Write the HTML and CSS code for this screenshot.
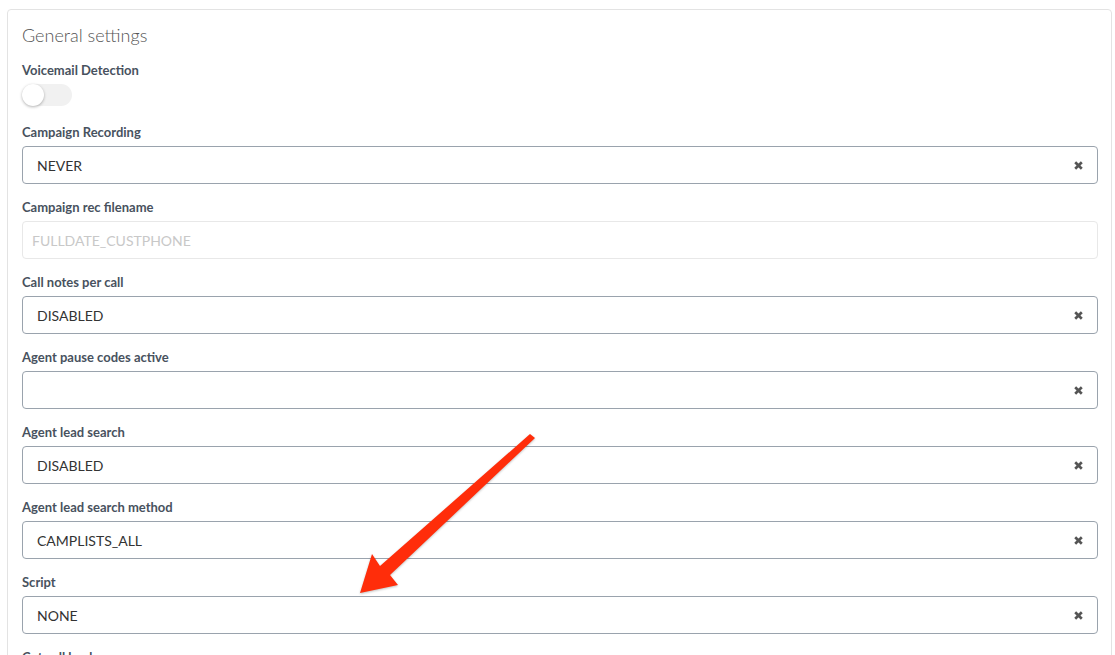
FILE: index.html
```html
<!DOCTYPE html>
<html lang="en">
<head>
  <meta charset="UTF-8" />
  <title>Campaign | General settings</title>
  <meta name="viewport" content="width=device-width, initial-scale=1.0" />
  <link rel="stylesheet" href="styles.css">
</head>
<body>

  <div class="card">
    <h2>General settings</h2>

    <!-- Voicemail -->
    <div class="field switch-field">
      <label>Voicemail Detection</label>
      <div class="toggle"><span class="knob"></span></div>
    </div>

    <div class="field">
      <label>Campaign Recording</label>
      <div class="select"><span>NEVER</span><svg class="clear" viewBox="0 0 10 10"><path d="M2 2L8 8M8 2L2 8"/></svg></div>
    </div>

    <div class="field">
      <label>Campaign rec filename</label>
      <input type="text" class="text-input" placeholder="FULLDATE_CUSTPHONE" />
    </div>

    <div class="field">
      <label>Call notes per call</label>
      <div class="select"><span>DISABLED</span><svg class="clear" viewBox="0 0 10 10"><path d="M2 2L8 8M8 2L2 8"/></svg></div>
    </div>

    <div class="field">
      <label>Agent pause codes active</label>
      <div class="select"><span></span><svg class="clear" viewBox="0 0 10 10"><path d="M2 2L8 8M8 2L2 8"/></svg></div>
    </div>

    <div class="field">
      <label>Agent lead search</label>
      <div class="select"><span>DISABLED</span><svg class="clear" viewBox="0 0 10 10"><path d="M2 2L8 8M8 2L2 8"/></svg></div>
    </div>

    <div class="field">
      <label>Agent lead search method</label>
      <div class="select"><span>CAMPLISTS_ALL</span><svg class="clear" viewBox="0 0 10 10"><path d="M2 2L8 8M8 2L2 8"/></svg></div>
    </div>

    <div class="field">
      <label>Script</label>
      <div class="select"><span>NONE</span><svg class="clear" viewBox="0 0 10 10"><path d="M2 2L8 8M8 2L2 8"/></svg></div>
    </div>

    <div class="field">
      <label>Cut call leads</label>
      <div class="select"><span></span><svg class="clear" viewBox="0 0 10 10"><path d="M2 2L8 8M8 2L2 8"/></svg></div>
    </div>
  </div>

  <!-- annotation arrow -->
  <svg class="arrow" width="1115" height="655" viewBox="0 0 1115 655">
    <polygon points="530,434 535,438 390,575 398,585 360,593 372,554 380,566" />
  </svg>

</body>
</html>
```

FILE: styles.css
```css
body {
  font-family: 'Lato', 'Liberation Sans', sans-serif;
  background: #fff;
  color: #333;
  margin: 9px 3px 0 7px;
  overflow: hidden;
}

.card {
  border: 1px solid #e3e3e3;
  border-radius: 4px;
  padding: 13px 13px 20px 14px;
}

h2 {
  font-size: 18px;
  font-weight: 300;
  color: #555;
  line-height: 24px;
  margin: 0 0 14px;
}

.field {
  margin-bottom: 14px;
}

.switch-field {
  margin-bottom: 17px;
}

label {
  display: block;
  font-size: 13px;
  font-weight: bold;
  color: #48525e;
  line-height: 18px;
  margin-bottom: 5px;
}

.toggle {
  width: 50px;
  height: 22px;
  border-radius: 11px;
  background: #f1f1f1;
  position: relative;
}

.toggle .knob {
  position: absolute;
  left: 0;
  top: 0;
  width: 22px;
  height: 22px;
  border-radius: 50%;
  background: #fff;
  box-shadow: 0 1px 3px rgba(0,0,0,0.3);
}

.select {
  height: 38px;
  box-sizing: border-box;
  border: 1px solid #9aa3ad;
  border-radius: 4px;
  display: flex;
  align-items: center;
  justify-content: space-between;
  padding: 0 13px 0 14px;
  font-size: 14px;
  color: #333;
}

.clear {
  width: 11px;
  height: 11px;
  stroke: #555;
  stroke-width: 2.4;
  fill: none;
}

.text-input {
  display: block;
  width: 100%;
  box-sizing: border-box;
  height: 38px;
  border: 1px solid #e8e8e8;
  border-radius: 4px;
  padding: 0 9px;
  font-family: inherit;
  font-size: 14px;
}

.text-input::placeholder {
  color: #c8c8c8;
}

.arrow {
  position: absolute;
  left: 0;
  top: 0;
  pointer-events: none;
}

.arrow polygon {
  fill: #ff2d0a;
  filter: drop-shadow(0 1px 1px rgba(0,0,0,0.25));
}
```
